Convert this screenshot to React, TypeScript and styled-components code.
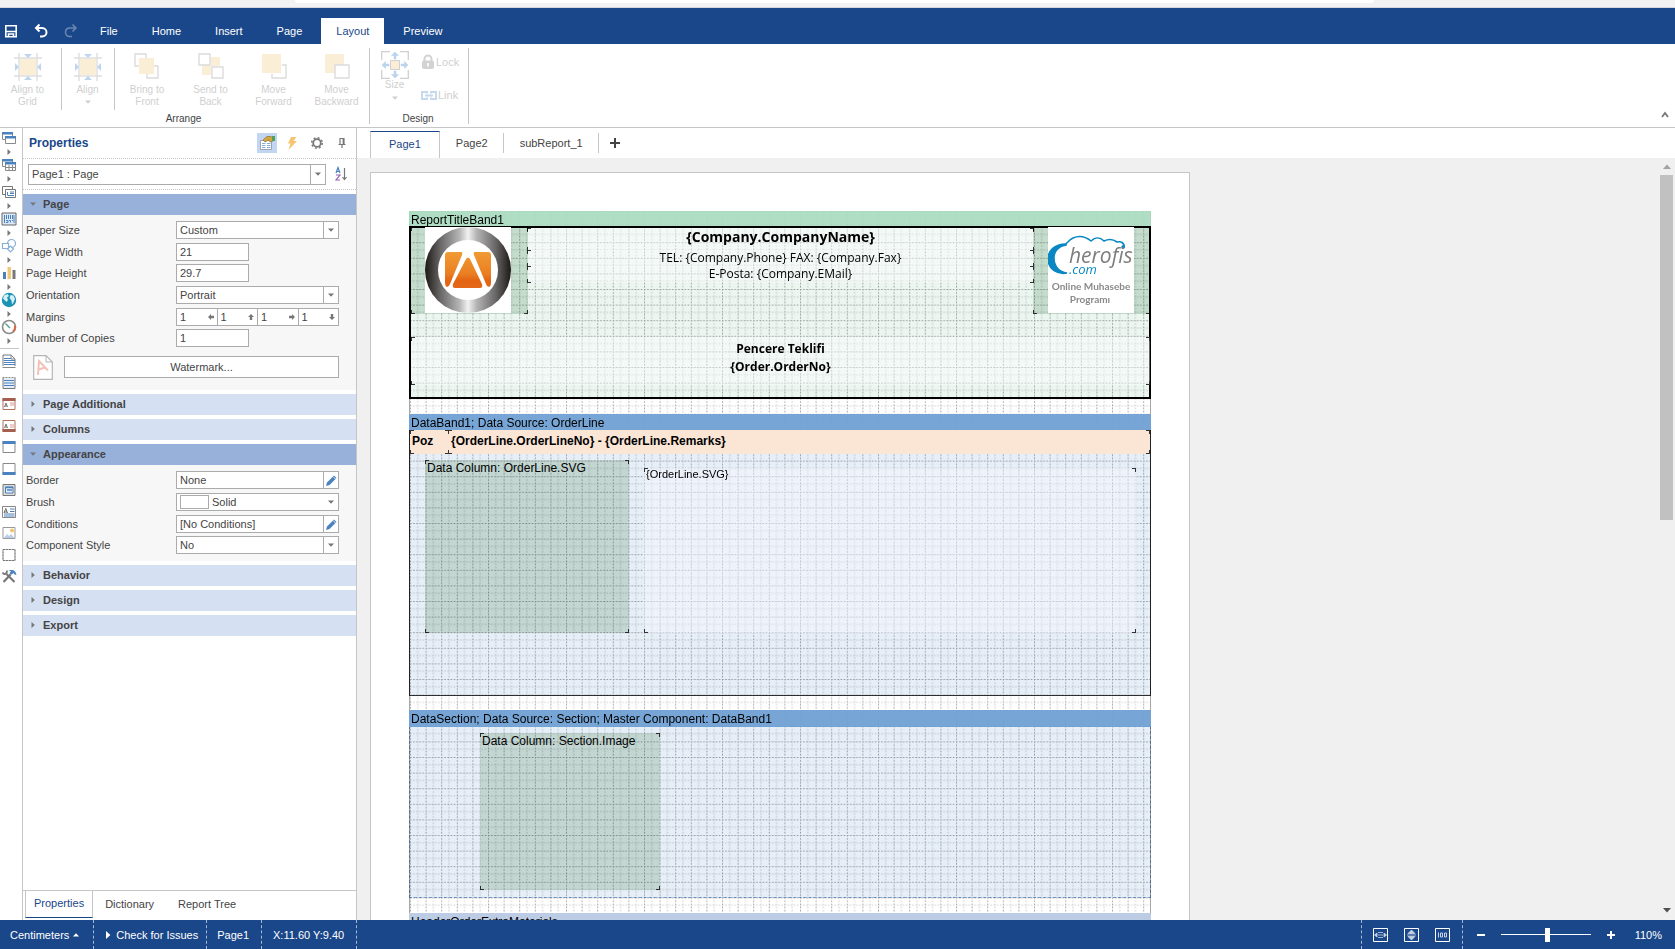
import React from "react";
import styled, { createGlobalStyle, css } from "styled-components";

const BLUE = "#1a4789";
const LINE = "#c6c6c6";
const FIELD = "#ababab";
const TEXT = "#444444";
const CAL = "#4a82bd";

const GlobalStyle = createGlobalStyle`
  *, *::before, *::after { box-sizing: border-box; }
  html, body, #root { height: 100%; }
  body {
    margin: 0;
    overflow: hidden;
    background: #fff;
    color: ${TEXT};
    font: 11px/14px "Liberation Sans", Arial, sans-serif;
  }
  button, input, select { font: inherit; color: inherit; margin: 0; padding: 0; border: 0; border-radius: 0; background: none; }
  svg { display: block; flex: none; }
  h1, h2 { margin: 0; font-size: 12px; }
`;

/* ---------- shell ---------- */

const Shell = styled.div`
  display: flex;
  flex-direction: column;
  height: 100vh;
`;

const BrowserStrip = styled.div`
  flex: none;
  height: 8px;
  padding: 0 301px 0 295px;
  background: #f2f2f2;
  border-bottom: 1px solid #d4d8dc;
  &::before {
    content: "";
    display: block;
    height: 3px;
    background: #fff;
    border-radius: 0 0 4px 4px;
  }
`;

const TopBar = styled.header`
  flex: none;
  display: flex;
  align-items: flex-end;
  height: 36px;
  background: ${BLUE};
  color: #fff;
`;

const QuickAccess = styled.div`
  display: flex;
  gap: 14px;
  width: 85px;
  padding: 0 0 5px 3px;
`;

const IconButton = styled.button<{ $active?: boolean }>`
  display: flex;
  align-items: center;
  justify-content: center;
  width: ${(p) => (p.$active === undefined ? 16 : 20)}px;
  height: ${(p) => (p.$active === undefined ? 16 : 20)}px;
  background: ${(p) => (p.$active ? "#c2d5f2" : "transparent")};
`;

const MenuTabs = styled.nav`
  display: flex;
  gap: 4px;
`;

const MenuTab = styled.button<{ $active?: boolean }>`
  height: 26px;
  padding: 0 15px;
  background: ${(p) => (p.$active ? "#fff" : "transparent")};
  color: ${(p) => (p.$active ? BLUE : "#fff")};
`;

const Ribbon = styled.div`
  flex: none;
  display: flex;
  align-items: flex-start;
  height: 84px;
  padding-top: 4px;
  border-bottom: 1px solid ${LINE};
`;

const RibbonGroup = styled.section<{ $width: number }>`
  display: flex;
  flex-direction: column;
  justify-content: space-between;
  flex: none;
  width: ${(p) => p.$width}px;
  height: 76px;
  border-right: 1px solid ${LINE};
`;

const RibbonRow = styled.div`
  display: flex;
`;

const RibbonCell = styled.div<{ $width: number; $divided?: boolean; $inset?: number }>`
  width: ${(p) => p.$width}px;
  height: 62px;
  padding-right: ${(p) => p.$inset ?? 0}px;
  border-right: ${(p) => (p.$divided ? `1px solid ${LINE}` : "0")};
`;

const RibbonButton = styled.button<{ $tight?: boolean }>`
  display: flex;
  flex-direction: column;
  align-items: center;
  gap: ${(p) => (p.$tight ? 0 : 3)}px;
  width: 100%;
  padding: ${(p) => (p.$tight ? 3 : 5)}px 0 0;
  color: #cfcfcf;
  font-size: 10px;
  line-height: 12px;
  white-space: pre-line;
`;

const RibbonIcon = styled.span`
  height: 28px;
`;

const RibbonCaret = styled.span`
  padding-top: 4px;
`;

const RibbonSide = styled.div`
  display: flex;
  flex-direction: column;
  gap: 17px;
  padding: 6px 0 0 2px;
`;

const RibbonSmall = styled.button`
  display: flex;
  align-items: center;
  gap: 1px;
  height: 16px;
  color: #cfcfcf;
`;

const GroupCaption = styled.div`
  text-align: center;
  font-size: 10px;
  line-height: 10px;
  padding-right: 2px;
`;

const Collapse = styled(IconButton)`
  margin: 59px 2px 0 auto;
`;

const Main = styled.main`
  flex: 1;
  min-height: 0;
  display: flex;
`;

/* ---------- left tool strip ---------- */

const ToolStrip = styled.aside`
  flex: none;
  width: 23px;
  border-right: 1px solid ${LINE};
  padding-top: 2px;
`;

const ToolMenu = styled.button`
  display: flex;
  flex-direction: column;
  align-items: center;
  gap: 3px;
  width: 17px;
  height: 27px;
`;

const ToolRule = styled.hr`
  width: 19px;
  height: 1px;
  margin: 2px 0 4px;
  border: 0;
  background: ${LINE};
`;

const ToolList = styled.div`
  display: flex;
  flex-direction: column;
  justify-content: space-between;
  height: 231px;
`;

const ToolButton = styled.button`
  display: flex;
  justify-content: center;
  width: 17px;
  height: 16px;
`;

/* ---------- properties panel ---------- */

const Panel = styled.aside`
  flex: none;
  display: flex;
  flex-direction: column;
  width: 334px;
  border-right: 1px solid ${LINE};
`;

const PanelHeader = styled.div`
  display: flex;
  align-items: center;
  height: 31px;
  padding: 0 4px 0 6px;
  border-bottom: 1px dotted ${LINE};
  color: ${BLUE};
`;

const PanelTools = styled.div`
  display: flex;
  gap: 5px;
  margin-left: auto;
`;

const Selector = styled.div`
  display: flex;
  align-items: center;
  gap: 8px;
  height: 31px;
  padding: 0 6px 0 5px;
  margin-bottom: 4px;
  border-bottom: 1px dotted ${LINE};
`;

const Groups = styled.div`
  display: flex;
  flex-direction: column;
  gap: 4px;
`;

const GroupHead = styled.button<{ $open?: boolean }>`
  display: flex;
  align-items: center;
  gap: 7px;
  width: 100%;
  height: 21px;
  padding: 0 0 2px 7px;
  background: ${(p) => (p.$open ? "#98b1db" : "#d5e0f2")};
  font-weight: bold;
  font-size: 11px;
`;

const GroupBody = styled.div<{ $bottom: number }>`
  padding: 6px 17px ${(p) => p.$bottom}px 3px;
  background: #f7f7f7;
`;

const Row = styled.div<{ $compact?: boolean }>`
  display: flex;
  align-items: flex-start;
  height: ${(p) => (p.$compact ? 21 : 22)}px;
`;

const Label = styled.label`
  width: 150px;
  line-height: 18px;
`;

const FieldBox = styled.div<{ $tall?: boolean }>`
  position: relative;
  flex: 1;
  min-width: 0;
  display: flex;
  align-items: center;
  height: ${(p) => (p.$tall ? 21 : 18)}px;
  border: 1px solid ${FIELD};
  background: #fff;
`;

const fieldText = css`
  flex: 1;
  min-width: 0;
  height: 100%;
  padding-left: 3px;
  appearance: none;
  outline: none;
`;

const Select = styled.select`
  ${fieldText}
`;

const Input = styled.input`
  ${fieldText}
`;

const ShortInput = styled.input`
  width: 73px;
  height: 18px;
  padding-left: 3px;
  border: 1px solid ${FIELD};
  background: #fff;
  outline: none;
`;

const FieldEnd = styled.span<{ $plain?: boolean }>`
  display: flex;
  align-items: center;
  justify-content: center;
  width: 15px;
  height: 100%;
  border-left: ${(p) => (p.$plain ? "0" : `1px solid ${FIELD}`)};
  pointer-events: none;
`;

const MarginCell = styled.label`
  flex: 1;
  min-width: 0;
  display: flex;
  align-items: center;
  height: 100%;
  padding-right: 3px;
  & + & { border-left: 1px solid ${FIELD}; }
`;

const Swatch = styled.span`
  width: 29px;
  height: 14px;
  margin-left: 3px;
  border: 1px solid ${FIELD};
`;

const WatermarkRow = styled.div`
  display: flex;
  align-items: center;
  gap: 11px;
  height: 22px;
  margin-top: 6px;
  padding-left: 7px;
`;

const WideButton = styled.button`
  flex: 1;
  height: 22px;
  border: 1px solid ${FIELD};
  background: #fff;
`;

const PanelTabs = styled.nav`
  display: flex;
  gap: 0;
  height: 30px;
  margin-top: auto;
  padding: 0 0 2px 2px;
  border-top: 1px solid ${LINE};
`;

const PanelTab = styled.button<{ $active?: boolean }>`
  height: 27px;
  padding: 0 ${(p) => (p.$active ? 8 : 12)}px 2px;
  border: solid ${LINE};
  border-width: ${(p) => (p.$active ? "0 1px 1px" : "0")};
  border-bottom-color: ${BLUE};
  color: ${(p) => (p.$active ? BLUE : TEXT)};
`;

/* ---------- designer ---------- */

const Designer = styled.section`
  flex: 1;
  min-width: 0;
  display: flex;
  flex-direction: column;
`;

const PageTabs = styled.nav`
  flex: none;
  display: flex;
  align-items: center;
  height: 30px;
  padding-left: 13px;
`;

const PageTab = styled.button<{ $active?: boolean }>`
  flex: none;
  height: ${(p) => (p.$active ? 27 : 20)}px;
  align-self: ${(p) => (p.$active ? "flex-end" : "center")};
  padding: 0 ${(p) => (p.$active ? 18 : 15)}px ${(p) => (p.$active ? 2 : 0)}px ${(p) => (p.$active ? 18 : 16)}px;
  border-right: 1px solid ${LINE};
  border-left: ${(p) => (p.$active ? `1px solid ${LINE}` : "0")};
  border-top: ${(p) => (p.$active ? `1px solid ${BLUE}` : "0")};
  color: ${(p) => (p.$active ? BLUE : TEXT)};
`;

const AddTab = styled.button`
  margin-left: 10px;
`;

const Workspace = styled.div`
  flex: 1;
  min-height: 0;
  display: flex;
  background: #f0f0f0;
`;

const Scroller = styled.div`
  flex: 1;
  min-width: 0;
  overflow: hidden;
  padding: 14px 0 0 13px;
`;

const Sheet = styled.div`
  width: 820px;
  padding: 38px;
  background: #fff;
  border: 1px solid ${LINE};
`;

/* The report surface: everything on it is placed by its own coordinates. */
const Surface = styled.div`
  position: relative;
  height: 1080px;
  border: solid #a8a8a8;
  border-width: 0 1px;
  background: #fff;
  color: #000;
  isolation: isolate;
`;

interface BoxProps {
  $x: number;
  $y: number;
  $w: number;
  $h: number;
  $fill?: string;
  $line?: string;
  $tint?: boolean;
}

/* A tinted item multiplies with the surface so that the grid stays visible through it. */
const Item = styled.div<BoxProps>`
  position: absolute;
  left: ${(p) => p.$x}px;
  top: ${(p) => p.$y}px;
  width: ${(p) => p.$w}px;
  height: ${(p) => p.$h}px;
  background: ${(p) => p.$fill ?? "transparent"};
  border: ${(p) => p.$line ?? "0"};
  mix-blend-mode: ${(p) => (p.$tint ? "multiply" : "normal")};
`;

const BandTitle = styled(Item)`
  padding: 1px 0 0 2px;
  font-size: 12px;
  line-height: 16px;
  white-space: nowrap;
`;

const ink = "linear-gradient(#333, #333)";
const Component = styled(Item)<{ $size?: number; $bold?: boolean; $center?: boolean; $sans?: boolean; $padTop?: number; $padLeft?: number; $leading?: number }>`
  display: flex;
  justify-content: ${(p) => (p.$center ? "center" : "flex-start")};
  padding: ${(p) => p.$padTop ?? 0}px 2px 0 ${(p) => p.$padLeft ?? 2}px;
  text-align: ${(p) => (p.$center ? "center" : "left")};
  white-space: pre-line;
  font-family: ${(p) => (p.$sans ? '"Open Sans", "Noto Sans", sans-serif' : '"Liberation Sans", Arial, sans-serif')};
  font-weight: ${(p) => (p.$bold ? "bold" : "normal")};
  font-size: ${(p) => p.$size ?? 12}px;
  line-height: ${(p) => p.$leading ?? 16}px;
  &::after {
    content: "";
    position: absolute;
    inset: 0;
    pointer-events: none;
    background-image: ${Array(8).fill(ink).join(",")};
    background-repeat: no-repeat;
    background-size: 4px 1px, 1px 4px, 4px 1px, 1px 4px, 4px 1px, 1px 4px, 4px 1px, 1px 4px;
    background-position: left top, left top, right top, right top, left bottom, left bottom, right bottom, right bottom;
  }
`;

const Picture = styled.div`
  width: 86px;
  height: 86px;
  background: #fff;
`;

const ScrollBar = styled.div`
  flex: none;
  display: flex;
  flex-direction: column;
  align-items: center;
  gap: 4px;
  width: 17px;
  padding: 5px 2px 6px;
`;

const Thumb = styled.div`
  width: 13px;
  height: 46%;
  background: #c1c1c1;
  margin-bottom: auto;
`;

/* ---------- status bar ---------- */

const Status = styled.footer`
  flex: none;
  display: flex;
  height: 29px;
  background: ${BLUE};
  color: #fff;
`;

const StatusCell = styled.div<{ $left: number; $right: number }>`
  display: flex;
  align-items: center;
  gap: 4px;
  padding: 0 ${(p) => p.$right}px 0 ${(p) => p.$left}px;
  border-right: 1px dashed #a5b8d6;
`;

const ViewCell = styled(StatusCell)`
  gap: 15px;
  margin-left: auto;
  border-left: 1px dashed #a5b8d6;
`;

const ZoomCell = styled.div`
  display: flex;
  align-items: center;
  gap: 12px;
  padding: 0 13px 0 10px;
`;

const ZoomValue = styled.output`
  margin-left: 4px;
`;

const Range = styled.input`
  appearance: none;
  width: 90px;
  height: 14px;
  background: linear-gradient(#fff, #fff) center / 100% 1px no-repeat;
  &::-webkit-slider-thumb {
    appearance: none;
    width: 5px;
    height: 14px;
    background: #fff;
  }
`;

/* ---------- icons ---------- */

const Caret = ({ dir = "down", color = "#777", size = 6 }: { dir?: string; color?: string; size?: number }) => {
  const turn: Record<string, number> = { down: 0, left: 90, up: 180, right: 270 };
  return (
    <svg width={size} height={size} viewBox="0 0 6 6">
      <path d="M0 1.5h6L3 4.8z" fill={color} transform={`rotate(${turn[dir]} 3 3)`} />
    </svg>
  );
};

const SaveIcon = () => (
  <svg width="16" height="16" viewBox="0 0 16 16" fill="none" stroke="#fff" strokeWidth="1.6">
    <path d="M2.8 2.8h10.4v11H2.8z" />
    <path d="M2.8 8.5h10.4M5.5 14v-3h5v3" />
  </svg>
);
const UndoIcon = ({ redo }: { redo?: boolean }) => (
  <svg width="16" height="16" viewBox="0 0 16 16" fill="none" stroke="#fff" strokeWidth={redo ? 1.5 : 2} opacity={redo ? 0.35 : 1}>
    <g transform={redo ? "matrix(-1 0 0 1 16 0)" : undefined}>
      <path d="M6.5 1.500 3 5l3.500 3.500M3.200 5h5.800c6 0 6 8.500 0 8.500H7" />
    </g>
  </svg>
);

const AlignIcon = () => (
  <svg width="28" height="28" viewBox="0 0 28 28">
    <path d="M5 0v28M23 0v28M0 5h28M0 23h28" stroke="#dedede" strokeWidth="1.4" />
    <path d="M6 6h16v16H6z" fill="#fbeed6" />
    <path d="M10 1h8l-4 4zM10 27h8l-4-4zM1 10v8l4-4zM27 10v8l-4-4z" fill="#bfd5ed" />
  </svg>
);
const FrontIcon = () => (
  <svg width="26" height="26" viewBox="0 0 26 26" fill="none" stroke="#dcdcdc" strokeWidth="1.4">
    <path d="M5 13H1V1h11v4M19 13h5v12H13v-4" />
    <path d="M5 5h15v16H5z" fill="#fbeed6" stroke="none" />
  </svg>
);
const BackIcon = () => (
  <svg width="26" height="26" viewBox="0 0 26 26" fill="none" stroke="#dcdcdc" strokeWidth="1.400">
    <path d="M13 4h9v9h-9zM4 12h9v10H4z" fill="#fbeed6" stroke="none" />
    <path d="M1 1h11v11H1zM14 14h11v11H14z" fill="#fff" />
  </svg>
);
const ForwardIcon = () => (
  <svg width="26" height="26" viewBox="0 0 26 26" fill="none" stroke="#dcdcdc" strokeWidth="1.4">
    <path d="M21 12h4v13H11v-4" />
    <path d="M1 1h19v19H1z" fill="#fbeed6" stroke="none" />
  </svg>
);
const BackwardIcon = () => (
  <svg width="26" height="26" viewBox="0 0 26 26" stroke="#dcdcdc" strokeWidth="1.4">
    <path d="M1 1h19v19H1z" fill="#fbeed6" stroke="none" />
    <path d="M11 12h14v13H11z" fill="#fff" />
  </svg>
);
const SizeIcon = () => (
  <svg width="28" height="28" viewBox="0 0 28 28" fill="none">
    <path d="M.7 9V.7H9M19 .7h8.300V9M.7 19v8.300H9M19 27.300h8.300V19" stroke="#d0d0d0" strokeWidth="1.300" />
    <path d="M9.500 9.500h9v9h-9z" fill="#fbeed6" stroke="#d0d0d0" />
    <path d="m14 1 3.500 3.500H15V8h-2V4.500h-2.500zM14 27l3.500-3.500H15V20h-2v3.500h-2.500zM1 14l3.500-3.500V13H8v2H4.500v2.500zM27 14l-3.500-3.500V13H20v2h3.500v2.500z" fill="#bcd3ec" stroke="#bcd3ec" strokeWidth=".6" />
  </svg>
);
const LockIcon = () => (
  <svg width="14" height="16" viewBox="0 0 14 16">
    <path d="M3.500 8V5a3.500 3.500 0 0 1 7 0v3" fill="none" stroke="#d2d2d2" strokeWidth="2" />
    <rect x="1" y="6.500" width="12" height="8.500" rx="2" fill="#d2d2d2" />
    <path d="M7 9v3.500" stroke="#fff" strokeWidth="1.600" />
  </svg>
);
const LinkIcon = () => (
  <svg width="16" height="16" viewBox="0 0 16 16" fill="none" stroke="#c4d8ee" strokeWidth="1.900">
    <path d="M6 6.500V5H1v7h5v-1.500M10 6.500V5h5v7h-5v-1.500M4 8.500h8" />
  </svg>
);

const BandsIcon = () => (
  <svg width="16" height="16" viewBox="0 0 16 16" fill="#fff" stroke="#888">
    <path d="M1.500 2.500h10v7h-10z" /><path d="M1 2h11v2.500H1z" fill={CAL} stroke="none" />
    <path d="M4.500 6.500h10v7h-10z" /><path d="M4 6h11v2.500H4z" fill={CAL} stroke="none" />
  </svg>
);
const TablesIcon = () => (
  <svg width="16" height="16" viewBox="0 0 16 16" fill="#fff" stroke="#888">
    <path d="M1.500 2.500h10v7h-10z" /><path d="M1 2h11v2.500H1z" fill={CAL} stroke="none" />
    <path d="M4.500 5.500h10v8h-10zM4.500 10.500h10M8 8v5M11.500 8v5" /><path d="M4 5h11v2.500H4z" fill={CAL} stroke="none" />
  </svg>
);
const CardsIcon = () => (
  <svg width="16" height="16" viewBox="0 0 16 16" fill="#fff" stroke="#777">
    <path d="M1.500 2.500h10v8h-10z" /><path d="M4.500 5.500h10v8h-10z" />
    <path d="M6.500 8v3M9 8h4M9 9.500h4M6.500 11.500H13" stroke={CAL} />
  </svg>
);
const BarcodeIcon = () => (
  <svg width="16" height="16" viewBox="0 0 16 16" fill="#dce9f7" stroke={CAL}>
    <path d="M1 2h14v12H1z" stroke="#666" />
    <path d="M3.500 4v8M5.500 4v4M7.500 4v4M9.500 4v4M11.500 4v4M13 4v8M5 9.500h2v2H5M8 9.500h1.500v2M11 9.500h1" />
  </svg>
);
const ShapesIcon = () => (
  <svg width="16" height="16" viewBox="0 0 16 16" fill="#fff" stroke="#87afd8" strokeWidth="1.200">
    <circle cx="10.500" cy="5.500" r="4" /><path d="M1.500 5.500h6v5h-6z" /><path d="m9.500 8 3 3-3 3-3-3z" />
  </svg>
);
const ChartIcon = () => (
  <svg width="16" height="16" viewBox="0 0 16 16">
    <path d="M2 7h3v7H2z" fill={CAL} /><path d="M6.500 2H10v12H6.500z" fill="#f0c878" /><path d="M11.500 5h3v9h-3z" fill="#787878" />
  </svg>
);
const GlobeIcon = () => (
  <svg width="16" height="16" viewBox="0 0 16 16">
    <circle cx="8" cy="8" r="7.200" fill="#1a93b4" />
    <path d="M3 3.500 6.500 2l1.500 2-2 1.500 1 2.500-1.500 2L3.500 8 2 6.500zM9.500 3l3 .5L14 7l-1.500 3.500-1.500 2-.5-4L8.500 6z" fill="#d8eff5" />
  </svg>
);
const GaugeIcon = () => (
  <svg width="16" height="16" viewBox="0 0 16 16" fill="none">
    <circle cx="8" cy="8" r="6.500" stroke="#8a8a8a" strokeWidth="1.600" />
    <path d="M14 6.500a6.500 6.500 0 0 1-2 6" stroke="#d9684a" strokeWidth="2" />
    <path d="M4.500 4.500 9 9" stroke="#5aa38c" strokeWidth="1.500" />
  </svg>
);
const BandIcon = ({ kind }: { kind: string }) => (
  <svg width="16" height="16" viewBox="0 0 16 16" fill="none">
    {kind === "title" && (<><path d="M2 13V2h8l4 4v7" fill="#fff" stroke="#777" /><path d="M3 5.500h7M3 7.500h11M3 9.500h11M3 11.500h11" stroke={CAL} /><path d="M1.500 14.500h13M10 2v4h4" stroke="#888" /></>)}
    {kind === "summary" && (<><path d="M2 3v10.500h12V3" fill="#e5eef8" stroke="#777" /><path d="M3 5.500h10M3 8h10M3 10.500h10" stroke={CAL} /><path d="M1.500 2.500h13" stroke="#888" strokeDasharray="2 1" /></>)}
    {(kind === "pageTop" || kind === "pageBottom") && (<><path d="M2 2.500h12v11H2z" fill="#fff" stroke="#b0705f" /><path d={kind === "pageTop" ? "M1.500 2h13v3h-13z" : "M1.500 11h13v3h-13z"} fill="#a3604f" /><path d="m3.500 10 1.500-4 1.500 4M4 9h2" stroke="#777" transform={kind === "pageTop" ? "translate(0 1)" : undefined} /><path d="M9 7h4M9 9h4" stroke="#d99a8c" /></>)}
    {(kind === "header" || kind === "footer") && (<><path d="M2 2.500h12v11H2z" fill="#fff" stroke="#888" /><path d={kind === "header" ? "M1.500 2h13v3h-13z" : "M1.500 11h13v3h-13z"} fill={CAL} /></>)}
    {kind === "data" && (<><path d="M2 2.500h12v11H2z" fill="#ddd" stroke="#777" /><path d="M4.500 5h7.500v6H4.500z" fill="#e8f1fb" stroke={CAL} /><path d="M4 5.500h8M6 8h5" stroke={CAL} strokeWidth="1.500" /></>)}
    {kind === "text" && (<><path d="M1.500 2.500h13v11h-13z" fill="#fff" stroke="#888" /><path d="M3 9 4.800 4.500 6.500 9M3.500 8h2.500" stroke="#666" /><path d="M9 5h4.500M9 7.500h4.500M3 10h10.500M3 12h10.500" stroke={CAL} /></>)}
    {kind === "image" && (<><path d="M2 2.500h12v11H2z" fill="#fff" stroke="#999" /><path d="m3 13 3-4 2 2 2-2 3.500 4z" fill="#b8cfe6" /><circle cx="11" cy="5.500" r="2" fill="#f3c56c" /></>)}
    {kind === "panel" && <><path d="M2 2.500h12v11H2z" fill="#fff" stroke="#b5b5b5" /><path d="M2 2.500h12v11H2z" stroke="#777" strokeDasharray="2 1" /></>}
    {kind === "tools" && (
      <>
        <path d="M2.500 14 9.500 6.500" stroke="#777" strokeWidth="2.200" />
        <path d="m5.500 6 8 8" stroke="#777" strokeWidth="2.200" />
        <path d="M1.500 4.500c1.500 2.500 4.500 2 4.500-2" stroke="#777" strokeWidth="1.800" />
        <path d="M7.500 2h4q3 .5 4 5l-2-.5-1-1.500-2.500 2-1.500-2 1.500-1.500z" fill={CAL} />
      </>
    )}
  </svg>
);

const PropsIcon = () => (
  <svg width="16" height="16" viewBox="0 0 16 16">
    <path d="M1.500 5.500h11v9h-11z" fill="#fff" stroke="#9aa4b0" />
    <path d="M3 8.500h3.500M8 8.500h3.500M3 10.500h3.500M8 10.500h3.500M3 12.500h3.500M8 12.500h3.500" stroke="#89acd4" />
    <path d="M4 5 8 1.500h4L14 3v3l-3 1-1.500-2L6 7z" fill="#d5a640" stroke="#8a7136" strokeWidth=".7" /><path d="M13 1h3v5h-3z" fill="#4fa15b" />
  </svg>
);
const BoltIcon = () => (
  <svg width="16" height="16" viewBox="0 0 16 16"><path d="M7 2h5.500L9.500 6H13l-8.500 9 2-6.500H4z" fill="#f5c570" /></svg>
);
const GearIcon = () => (
  <svg width="16" height="16" viewBox="0 0 16 16" fill="none" stroke="#777">
    <circle cx="8" cy="8" r="3.800" strokeWidth="1.800" />
    <circle cx="8" cy="8" r="5.300" strokeWidth="1.500" strokeDasharray="2 2.160" />
  </svg>
);
const PinIcon = () => (
  <svg width="16" height="16" viewBox="0 0 16 16" fill="none" stroke="#777" strokeWidth="1.200"><path d="M6 9.500v-6h4v6M4.500 9.500h7M8 9.500V13M9.200 4v5" /></svg>
);
const SortIcon = () => (
  <svg width="14" height="16" viewBox="0 0 14 16" fill="none">
    <path d="m1 7 2-5.500L5 7M1.500 5.500h3" stroke={CAL} strokeWidth="1.200" /><path d="M1 9h4l-4 5h4" stroke="#9360b5" strokeWidth="1.200" />
    <path d="M9.500 2v11M7.500 11l2 2.500 2-2.500" stroke="#777" strokeWidth="1.200" />
  </svg>
);
const PencilIcon = () => (
  <svg width="13" height="13" viewBox="0 0 13 13"><path d="M1 12l1-3.500L9 1.500 11.500 4 4.500 11z" fill={CAL} /><path d="m8 2.500 2.500 2.500" stroke="#fff" strokeWidth=".8" /></svg>
);
const ArrowIcon = ({ turn }: { turn: number }) => (
  <svg width="6" height="6" viewBox="0 0 6 6"><path d="M0 3 3 0v1.800h3v2.400H3V6z" fill="#777" transform={`rotate(${turn} 3 3)`} /></svg>
);
const WatermarkIcon = () => (
  <svg width="20" height="25" viewBox="0 0 20 25" fill="none">
    <path d="M.7.700H13l6.300 6.300v17.300H.7z" fill="#fff" stroke="#b5b5b5" strokeWidth="1.200" /><path d="M13 1v6h6" stroke="#b5b5b5" />
    <path d="m5 20 1-14 9 9.500M5.500 14.500l6.500-2" stroke="#f3c1b8" strokeWidth="2" />
  </svg>
);
const PlusIcon = () => (
  <svg width="12" height="12" viewBox="0 0 12 12"><path d="M6 1v10M1 6h10" stroke={TEXT} strokeWidth="2" /></svg>
);
const ViewIcon = ({ kind }: { kind: string }) => (
  <svg width="15" height="14" viewBox="0 0 15 14" fill="none" stroke="#fff">
    <path d="M.5.500h14v13H.5z" />
    {kind === "width" && <path d="M1.500 7 4 5v4zM13.500 7 11 5v4zM5 4.500h5M5 7h5M5 9.500h5" fill="#c7d3e6" stroke="#c7d3e6" strokeWidth=".8" />}
    {kind === "page" && <path d="M7.500 2 11 5.500H4zM7.500 12 11 8.500H4zM3 7h9" fill="#c7d3e6" stroke="#c7d3e6" strokeWidth=".8" />}
    {kind === "full" && <path d="M3.500 4.500v5M5.500 5h2v4h-2zM9.500 5h2v4h-2z" stroke="#c7d3e6" />}
  </svg>
);

const GridLines = styled.svg`
  position: absolute;
  inset: 0;
`;

const Grid = () => (
  <GridLines width="100%" height="100%" aria-hidden="true">
    <defs>
      <pattern id="cells" width="15.600" height="15.600" patternUnits="userSpaceOnUse">
        <path d="M7.800 0v15.600M0 7.800h15.600" stroke="#cdcdcd" strokeDasharray="1.560 1.560" />
        <path d="M.5 0v15.600M0 .5h15.600" stroke="#a2a2a2" strokeDasharray="1.560 1.560" />
      </pattern>
    </defs>
    <rect width="100%" height="100%" fill="url(#cells)" />
  </GridLines>
);

const RingLogo = () => (
  <svg width="86" height="86" viewBox="0 0 86 86">
    <defs>
      <linearGradient id="steel">
        <stop offset="0" stopColor="#1c1815" /><stop offset=".18" stopColor="#696767" /><stop offset=".4" stopColor="#b5b5b5" />
        <stop offset=".5" stopColor="#f2f2f2" /><stop offset=".6" stopColor="#b5b5b5" /><stop offset=".82" stopColor="#696767" /><stop offset="1" stopColor="#1c1815" />
      </linearGradient>
      <linearGradient id="amber" gradientUnits="userSpaceOnUse" x1="0" x2="0" y1="25" y2="61">
        <stop offset="0" stopColor="#f09b34" /><stop offset=".6" stopColor="#ea7f22" /><stop offset=".8" stopColor="#e36412" /><stop offset="1" stopColor="#e36818" />
      </linearGradient>
    </defs>
    <circle cx="43" cy="43" r="43" fill="url(#steel)" />
    <circle cx="43" cy="43" r="30" fill="#fff" />
    <g fill="url(#amber)">
      <path d="M23 25h13q2 0 1 3L25 57q-1 3-3 3-2-1-2-4V28q0-3 3-3z" />
      <path d="M63 25H50q-2 0-1 3l12 29q1 3 3 3 2-1 2-4V28q0-3-3-3z" />
      <path d="M41 32q2-3 4 0l12 25q1 4-2 4H30q-3 0-2-4z" />
    </g>
  </svg>
);

const HerofisLogo = () => (
  <svg width="86" height="86" viewBox="0 0 86 86">
    <path d="M18 17C6 17 0 24 0 32c0 10 9 16 19 14-8-1-13-7-13-15 0-7 5-12 12-13z" fill="#0a87c3" stroke="#0a87c3" strokeWidth="1.500" />
    <path d="M17 18c3-3 4-5 8-7 7-3 13-1 18 3 4-4 9-4 13 0 4-2 9-2 13 1 4-1 8 1 7 6" fill="none" stroke="#0a87c3" strokeWidth="1.600" />
    <circle cx="75" cy="20" r="1.800" fill="#0a87c3" />
    <text x="21" y="36" fontFamily="Open Sans, sans-serif" fontStyle="italic" fontSize="21" fill="#7d7d7d">herofis</text>
    <text x="21" y="47" fontFamily="Open Sans, sans-serif" fontStyle="italic" fontSize="13" fill="#0a87c3">.com</text>
    <text x="43" y="63" textAnchor="middle" fontFamily="Lato, sans-serif" fontWeight="bold" fontSize="10" fill="#8a8a8a">Online Muhasebe</text>
    <text x="42" y="76" textAnchor="middle" fontFamily="Lato, sans-serif" fontWeight="bold" fontSize="10" fill="#8a8a8a">Programı</text>
  </svg>
);

/* ---------- data ---------- */

const menus = ["File", "Home", "Insert", "Page", "Layout", "Preview"];
const arrange = [
  { text: "Align to\nGrid", icon: <AlignIcon />, width: 62, inset: 6, divided: true },
  { text: "Align", icon: <AlignIcon />, width: 53, inset: 1, divided: true, menu: true },
  { text: "Bring to\nFront", icon: <FrontIcon />, width: 64 },
  { text: "Send to\nBack", icon: <BackIcon />, width: 63 },
  { text: "Move\nForward", icon: <ForwardIcon />, width: 63 },
  { text: "Move\nBackward", icon: <BackwardIcon />, width: 63 },
];
const toolMenus: [string, React.ReactNode][] = [
  ["Bands", <BandsIcon />], ["Cross bands", <TablesIcon />], ["Components", <CardsIcon />], ["Barcodes", <BarcodeIcon />],
  ["Shapes", <ShapesIcon />], ["Charts", <ChartIcon />], ["Maps", <GlobeIcon />], ["Gauges", <GaugeIcon />],
];
const tools = ["title", "summary", "pageTop", "pageBottom", "header", "footer", "data", "text", "image", "panel", "tools"];

const PAPER = "rgba(255, 255, 255, 0.4)";
const LEAF = "#d3e4d8";
const MOSS = "#d8e6d9";
const SKY = "#e6eef7";
const STEEL = "rgba(112, 161, 212, 0.95)";
const PEACH = "#fbe5d5";

interface SelectFieldProps {
  id: string;
  value: string;
  label?: string;
  end?: React.ReactNode;
  plain?: boolean;
  swatch?: boolean;
  tall?: boolean;
}

const SelectField = ({ id, value, label, end, plain, swatch, tall }: SelectFieldProps) => (
  <FieldBox $tall={tall}>
    {swatch && <Swatch />}
    <Select id={id} defaultValue={value} aria-label={label}>
      <option>{value}</option>
    </Select>
    <FieldEnd $plain={plain}>{end ?? <Caret />}</FieldEnd>
  </FieldBox>
);

export default function App() {
  return (
    <Shell>
      <GlobalStyle />
      <BrowserStrip />
      <TopBar>
        <QuickAccess>
          <IconButton aria-label="Save"><SaveIcon /></IconButton>
          <IconButton aria-label="Undo"><UndoIcon /></IconButton>
          <IconButton aria-label="Redo"><UndoIcon redo /></IconButton>
        </QuickAccess>
        <MenuTabs>
          {menus.map((m) => <MenuTab key={m} $active={m === "Layout"}>{m}</MenuTab>)}
        </MenuTabs>
      </TopBar>

      <Ribbon>
        <RibbonGroup $width={370}>
          <RibbonRow>
            {arrange.map((b) => (
              <RibbonCell key={b.text} $width={b.width} $inset={b.inset} $divided={b.divided}>
                <RibbonButton>
                  <RibbonIcon>{b.icon}</RibbonIcon>
                  <span>{b.text}</span>
                  {b.menu && <Caret color="#cfcfcf" />}
                </RibbonButton>
              </RibbonCell>
            ))}
          </RibbonRow>
          <GroupCaption>Arrange</GroupCaption>
        </RibbonGroup>
        <RibbonGroup $width={99}>
          <RibbonRow>
            <RibbonCell $width={49}>
              <RibbonButton $tight>
                <RibbonIcon><SizeIcon /></RibbonIcon>
                <span>Size</span>
                <RibbonCaret><Caret color="#cfcfcf" /></RibbonCaret>
              </RibbonButton>
            </RibbonCell>
            <RibbonSide>
              <RibbonSmall><LockIcon />Lock</RibbonSmall>
              <RibbonSmall><LinkIcon />Link</RibbonSmall>
            </RibbonSide>
          </RibbonRow>
          <GroupCaption>Design</GroupCaption>
        </RibbonGroup>
        <Collapse aria-label="Collapse ribbon">
          <svg width="8" height="8" viewBox="0 0 8 8"><path d="m1 6 3-4 3 4" fill="none" stroke="#777" strokeWidth="1.800" /></svg>
        </Collapse>
      </Ribbon>

      <Main>
        <ToolStrip>
          {toolMenus.map(([name, icon]) => (
            <ToolMenu key={name} aria-label={name}>{icon}<Caret dir="right" /></ToolMenu>
          ))}
          <ToolRule />
          <ToolList>
            {tools.map((t) => <ToolButton key={t} aria-label={t}><BandIcon kind={t} /></ToolButton>)}
          </ToolList>
        </ToolStrip>

        <Panel>
          <PanelHeader>
            <h1>Properties</h1>
            <PanelTools>
              <IconButton $active aria-label="Properties"><PropsIcon /></IconButton>
              <IconButton $active={false} aria-label="Events"><BoltIcon /></IconButton>
              <IconButton $active={false} aria-label="Settings"><GearIcon /></IconButton>
              <IconButton $active={false} aria-label="Pin"><PinIcon /></IconButton>
            </PanelTools>
          </PanelHeader>
          <Selector>
            <SelectField id="component" value="Page1 : Page" label="Component" tall />
            <IconButton aria-label="Sort"><SortIcon /></IconButton>
          </Selector>
          <Groups>
            <div>
              <GroupHead $open><Caret />Page</GroupHead>
              <GroupBody $bottom={12}>
                <Row><Label htmlFor="paper">Paper Size</Label><SelectField id="paper" value="Custom" /></Row>
                <Row $compact><Label htmlFor="width">Page Width</Label><ShortInput id="width" defaultValue="21" /></Row>
                <Row><Label htmlFor="height">Page Height</Label><ShortInput id="height" defaultValue="29.7" /></Row>
                <Row><Label htmlFor="orientation">Orientation</Label><SelectField id="orientation" value="Portrait" /></Row>
                <Row $compact>
                  <Label htmlFor="left">Margins</Label>
                  <FieldBox>
                    {["left", "top", "right", "bottom"].map((side, i) => (
                      <MarginCell key={side}>
                        <Input id={side} defaultValue="1" aria-label={`Margin ${side}`} />
                        <ArrowIcon turn={i * 90} />
                      </MarginCell>
                    ))}
                  </FieldBox>
                </Row>
                <Row $compact><Label htmlFor="copies">Number of Copies</Label><ShortInput id="copies" defaultValue="1" /></Row>
                <WatermarkRow><WatermarkIcon /><WideButton>Watermark...</WideButton></WatermarkRow>
              </GroupBody>
            </div>
            <GroupHead><Caret dir="right" />Page Additional</GroupHead>
            <GroupHead><Caret dir="right" />Columns</GroupHead>
            <div>
              <GroupHead $open><Caret />Appearance</GroupHead>
              <GroupBody $bottom={3}>
                <Row><Label htmlFor="border">Border</Label><SelectField id="border" value="None" end={<PencilIcon />} /></Row>
                <Row><Label htmlFor="brush">Brush</Label><SelectField id="brush" value="Solid" swatch plain /></Row>
                <Row $compact><Label htmlFor="conditions">Conditions</Label><SelectField id="conditions" value="[No Conditions]" end={<PencilIcon />} /></Row>
                <Row><Label htmlFor="style">Component Style</Label><SelectField id="style" value="No" /></Row>
              </GroupBody>
            </div>
            <GroupHead><Caret dir="right" />Behavior</GroupHead>
            <GroupHead><Caret dir="right" />Design</GroupHead>
            <GroupHead><Caret dir="right" />Export</GroupHead>
          </Groups>
          <PanelTabs>
            <PanelTab $active>Properties</PanelTab>
            <PanelTab>Dictionary</PanelTab>
            <PanelTab>Report Tree</PanelTab>
          </PanelTabs>
        </Panel>

        <Designer>
          <PageTabs>
            <PageTab $active>Page1</PageTab>
            <PageTab>Page2</PageTab>
            <PageTab>subReport_1</PageTab>
            <AddTab aria-label="Add page"><PlusIcon /></AddTab>
          </PageTabs>
          <Workspace>
            <Scroller>
              <Sheet>
                <Surface>
                  <Grid />
                  <Item $x={-1} $y={15} $w={742} $h={173} $fill="#ecf6f1" $line="2px solid #000" $tint />
                  <BandTitle $x={-1} $y={0} $w={742} $h={15} $fill="rgba(168, 219, 191, 0.92)">ReportTitleBand1</BandTitle>
                  <Component $x={117} $y={17} $w={507} $h={23} $fill={PAPER} $sans $bold $center $size={14} $leading={18}>{"{Company.CompanyName}"}</Component>
                  <Component $x={117} $y={39} $w={507} $h={17} $fill={PAPER} $sans $center>{"TEL: {Company.Phone} FAX: {Company.Fax}"}</Component>
                  <Component $x={117} $y={55} $w={507} $h={17} $fill={PAPER} $sans $center>{"E-Posta: {Company.EMail}"}</Component>
                  <Component $x={1} $y={16} $w={117} $h={87} $fill={LEAF} $tint />
                  <Component $x={623} $y={16} $w={117} $h={87} $fill={LEAF} $tint />
                  <Item $x={15} $y={16} $w={86} $h={86}><Picture><RingLogo /></Picture></Item>
                  <Item $x={638} $y={16} $w={86} $h={86}><Picture><HerofisLogo /></Picture></Item>
                  <Component $x={1} $y={126} $w={739} $h={48} $fill={PAPER} $sans $bold $center $padTop={3} $leading={18}>{"Pencere Teklifi\n{Order.OrderNo}"}</Component>

                  <Item $x={-1} $y={219} $w={742} $h={266} $fill={SKY} $line="1px solid #333" $tint />
                  <BandTitle $x={-1} $y={203} $w={742} $h={16} $fill={STEEL}>DataBand1; Data Source: OrderLine</BandTitle>
                  <Component $x={0} $y={219} $w={39} $h={24} $fill={PEACH} $bold $padTop={3}>Poz</Component>
                  <Component $x={38} $y={219} $w={702} $h={24} $fill={PEACH} $bold $padTop={3} $padLeft={3}>{"{OrderLine.OrderLineNo} - {OrderLine.Remarks}"}</Component>
                  <Component $x={15} $y={249} $w={204} $h={173} $fill={MOSS} $tint>Data Column: OrderLine.SVG</Component>
                  <Component $x={234} $y={257} $w={492} $h={165} $fill="rgba(246, 247, 255, 0.45)" $size={11} $leading={12}>{"{OrderLine.SVG}"}</Component>

                  <Item $x={-1} $y={515} $w={742} $h={172} $fill={SKY} $line="1px dashed #7ba7d6" $tint />
                  <BandTitle $x={-1} $y={499} $w={742} $h={17} $fill={STEEL}>DataSection; Data Source: Section; Master Component: DataBand1</BandTitle>
                  <Component $x={70} $y={522} $w={180} $h={157} $fill={MOSS} $tint>Data Column: Section.Image</Component>

                  <BandTitle $x={-1} $y={702} $w={742} $h={17} $fill="#bccce4">HeaderOrderExtraMaterials</BandTitle>
                </Surface>
              </Sheet>
            </Scroller>
            <ScrollBar>
              <Caret dir="up" color="#a3a3a3" size={8} />
              <Thumb />
              <Caret color="#505050" size={8} />
            </ScrollBar>
          </Workspace>
        </Designer>
      </Main>

      <Status>
        <StatusCell $left={10} $right={14}>Centimeters<Caret dir="up" color="#fff" /></StatusCell>
        <StatusCell $left={10} $right={8}><Caret dir="right" color="#fff" size={8} />Check for Issues</StatusCell>
        <StatusCell $left={10} $right={12}>Page1</StatusCell>
        <StatusCell $left={11} $right={12}>X:11.60 Y:9.40</StatusCell>
        <ViewCell $left={11} $right={11}>
          <IconButton aria-label="Fit width"><ViewIcon kind="width" /></IconButton>
          <IconButton aria-label="Fit page"><ViewIcon kind="page" /></IconButton>
          <IconButton aria-label="Actual size"><ViewIcon kind="full" /></IconButton>
        </ViewCell>
        <ZoomCell>
          <IconButton aria-label="Zoom out"><svg width="8" height="8"><path d="M0 4h8" stroke="#fff" strokeWidth="2" /></svg></IconButton>
          <Range type="range" min={0} max={210} defaultValue={110} aria-label="Zoom" />
          <IconButton aria-label="Zoom in"><svg width="8" height="8"><path d="M0 4h8M4 0v8" stroke="#fff" strokeWidth="2" /></svg></IconButton>
          <ZoomValue>110%</ZoomValue>
        </ZoomCell>
      </Status>
    </Shell>
  );
}
